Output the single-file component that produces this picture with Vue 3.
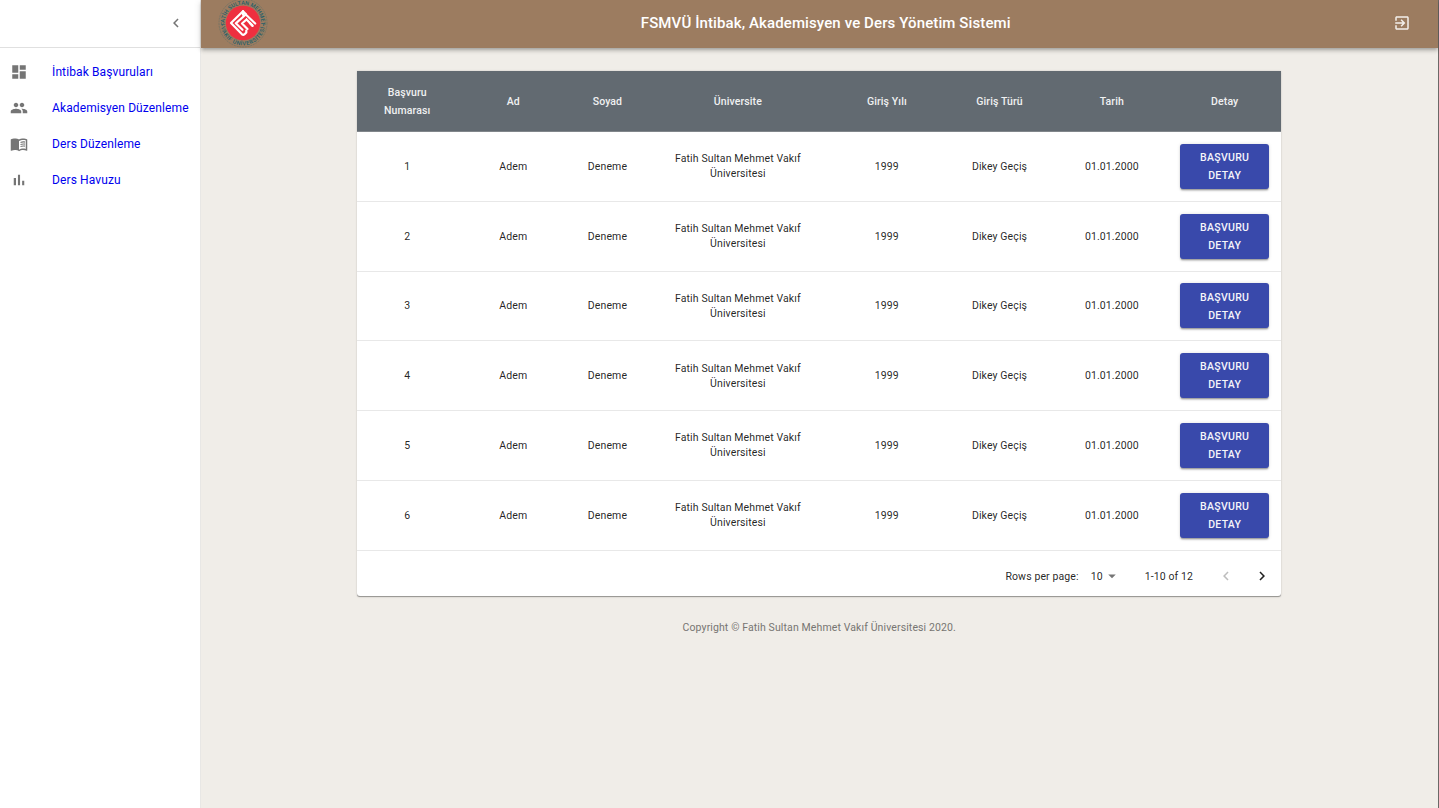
<script setup>
const menu = [
  { label: 'İntibak Başvuruları', icon: 'M3 13h8V3H3v10zm0 8h8v-6H3v6zm10 0h8V11h-8v10zm0-18v6h8V3h-8z' },
  { label: 'Akademisyen Düzenleme', icon: 'M16 11c1.66 0 2.99-1.34 2.99-3S17.66 5 16 5c-1.66 0-3 1.34-3 3s1.34 3 3 3zm-8 0c1.66 0 2.99-1.34 2.99-3S9.66 5 8 5C6.34 5 5 6.34 5 8s1.34 3 3 3zm0 2c-2.33 0-7 1.17-7 3.5V19h14v-2.500c0-2.330-4.670-3.500-7-3.500zm8 0c-.29 0-.62.02-.97.05 1.160.840 1.970 1.970 1.970 3.450V19h6v-2.500c0-2.330-4.670-3.500-7-3.500z' },
  { label: 'Ders Düzenleme', icon: 'M17.500 4.500c-1.950 0-4.050.4-5.500 1.500-1.450-1.100-3.550-1.500-5.500-1.500S2.450 4.900 1 6v14.650c0 .250.250.5.5.5.1 0 .15-.05.25-.05C3.100 20.450 5.050 20 6.500 20c1.950 0 4.050.4 5.500 1.500 1.350-.85 3.800-1.500 5.500-1.500 1.650 0 3.350.3 4.750 1.050.1.050.15.050.25.050.25 0 .5-.25.5-.5V6c-1.490-1.120-3.630-1.500-5.500-1.500zm3.500 14c-1.100-.35-2.300-.5-3.500-.5-1.700 0-4.150.65-5.500 1.500V8c1.350-.85 3.800-1.500 5.500-1.500 1.200 0 2.400.15 3.500.5v11.500zM14 9.200c1.700-.75 4-.9 6-.5v1.500c-2-.4-4.300-.25-6 .55zm0 2.700c1.700-.75 4-.9 6-.5v1.500c-2-.4-4.300-.25-6 .55zm0 2.700c1.700-.75 4-.9 6-.5v1.500c-2-.4-4.300-.25-6 .55z' },
  { label: 'Ders Havuzu', icon: 'M5 9.200h3V19H5zM10.600 5h2.800v14h-2.800zm5.600 8H19v6h-2.800z' },
]
const columns = ['Başvuru Numarası', 'Ad', 'Soyad', 'Üniversite', 'Giriş Yılı', 'Giriş Türü', 'Tarih', 'Detay']
const rows = [1, 2, 3, 4, 5, 6].map((n) => [n, 'Adem', 'Deneme', 'Fatih Sultan Mehmet Vakıf Üniversitesi', '1999', 'Dikey Geçiş', '01.01.2000'])
</script>

<template>
  <div class="layout">
    <aside class="sidebar">
      <div class="collapse">
        <svg class="icon" viewBox="0 0 24 24"><path d="M15.410 7.410L14 6l-6 6 6 6 1.410-1.410L10.830 12z" /></svg>
      </div>
      <nav>
        <a v-for="item in menu" :key="item.label" class="item">
          <svg class="icon" viewBox="0 0 24 24"><path :d="item.icon" /></svg>
          <span>{{ item.label }}</span>
        </a>
      </nav>
    </aside>

    <div class="content">
      <header class="bar">
        <svg class="logo" viewBox="0 0 50 50">
          <defs>
            <path id="ring-top" d="M6.700 28v-3a18.300 18.300 0 0 1 36.600 0v3" />
            <path id="ring-bottom" d="M2.600 25a22.400 22.400 0 0 0 44.800 0" />
          </defs>
          <circle cx="25" cy="25" r="24" fill="none" stroke="#6a7166" stroke-width=".7" stroke-dasharray="2 .8" />
          <circle cx="25" cy="25" r="17.200" fill="#ee2f3f" />
          <text class="seal"><textPath href="#ring-top" startOffset="50%">FATİH SULTAN MEHMET</textPath></text>
          <text class="seal wide"><textPath href="#ring-bottom" startOffset="50%">VAKIF ÜNİVERSİTESİ</textPath></text>
          <circle cx="4.300" cy="27" r=".7" fill="#245f69" />
          <circle cx="45.700" cy="27" r=".7" fill="#245f69" />
          <g fill="none" stroke="#fff" stroke-width="2.200" stroke-linejoin="round" stroke-linecap="round">
            <path d="M25 13.300L13 25l11 11.300q1.300 1 2.600-.1l1.700-1.700v-2" />
            <path d="M25 13.300v3.500M27.800 16.500L17.800 25.300l6.700 6.500" />
            <path d="M27.800 16.500l9.400 9M25 13.300l3 3M32 25.300l2.500 2.600" />
            <path d="M28.500 21.500l-4.500 4 5.500 5.500M28.500 21.500l6 6" />
          </g>
        </svg>
        <h1>FSMVÜ İntibak, Akademisyen ve Ders Yönetim Sistemi</h1>
        <svg class="icon exit" viewBox="0 0 24 24"><path d="M10.090 15.590L11.500 17l5-5-5-5-1.410 1.410L12.670 11H3v2h9.670l-2.580 2.590zM19 3H5c-1.110 0-2 .9-2 2v4h2V5h14v14H5v-4H3v4c0 1.100.89 2 2 2h14c1.100 0 2-.9 2-2V5c0-1.100-.9-2-2-2z" /></svg>
      </header>

      <main>
        <section class="paper">
          <div class="row head">
            <div v-for="c in columns" :key="c" class="cell">{{ c }}</div>
          </div>
          <div v-for="r in rows" :key="r[0]" class="row">
            <div v-for="(v, i) in r" :key="i" class="cell">{{ v }}</div>
            <div class="cell"><button>BAŞVURU DETAY</button></div>
          </div>
          <div class="pager">
            <span>Rows per page:</span>
            <span class="size">10</span>
            <svg class="icon" viewBox="0 0 24 24"><path d="M7 10l5 5 5-5z" /></svg>
            <span class="range">1-10 of 12</span>
            <svg class="icon prev" viewBox="0 0 24 24"><path d="M15.410 16.590L10.830 12l4.580-4.590L14 6l-6 6 6 6z" /></svg>
            <svg class="icon next" viewBox="0 0 24 24"><path d="M8.590 16.590L13.170 12 8.590 7.410 10 6l6 6-6 6z" /></svg>
          </div>
        </section>
        <footer>Copyright © Fatih Sultan Mehmet Vakıf Üniversitesi 2020.</footer>
      </main>
    </div>
  </div>
</template>

<style>
body {
  margin: 0;
  overflow: hidden;
}
</style>

<style scoped>
.layout {
  display: flex;
  box-sizing: border-box;
  width: 100vw;
  height: 100vh;
  border-right: 1px solid #6b6967;
  background: #f0ede8;
  font-family: Roboto, sans-serif;
  color: rgba(0, 0, 0, 0.87);
}
.icon {
  display: block;
  flex: none;
  width: 18px;
  height: 18px;
  fill: #757575;
}
.sidebar {
  box-sizing: border-box;
  flex: none;
  width: 200.500px;
  background: #fff;
  border-right: 1px solid #e8e7e5;
}
.collapse {
  display: flex;
  align-items: center;
  justify-content: flex-end;
  box-sizing: border-box;
  height: 48px;
  padding: 0 14.500px 2px 0;
  border-bottom: 1px solid #e0e0e0;
}
nav {
  padding-top: 6px;
}
.item {
  display: flex;
  align-items: center;
  height: 36px;
  padding-left: 10px;
  font-size: 12px;
  letter-spacing: 0.113px;
  color: #0000ee;
  white-space: nowrap;
}
.item span {
  margin-left: 24px;
}
.content {
  flex: 1;
  min-width: 0;
}
.bar {
  display: flex;
  align-items: center;
  box-sizing: border-box;
  height: 48px;
  padding: 0 27.500px 2px 17.500px;
  background: #9c7c60;
  box-shadow: 0 1.500px 3px -0.750px rgba(0, 0, 0, 0.2), 0 3px 3.750px rgba(0, 0, 0, 0.14), 0 0.750px 7.500px rgba(0, 0, 0, 0.12);
}
.logo {
  flex: none;
  width: 50px;
  height: 50px;
  overflow: visible;
}
.seal {
  font-size: 5.600px;
  font-weight: 500;
  letter-spacing: 0;
  fill: #245f69;
  text-anchor: middle;
}
.wide {
  letter-spacing: 0.500px;
}
h1 {
  flex: 1;
  margin: 0;
  padding-right: 9px;
  font-size: 15px;
  font-weight: 500;
  letter-spacing: 0.113px;
  text-align: center;
  color: #fff;
}
.exit {
  fill: #f3efeb;
}
main {
  display: flex;
  flex-direction: column;
  align-items: center;
  padding-top: 23.250px;
}
.paper {
  width: 924.400px;
  background: #fff;
  border-radius: 0 0 3px 3px;
  box-shadow: 0 1.500px 0.750px -0.750px rgba(0, 0, 0, 0.2), 0 0.750px 0.750px rgba(0, 0, 0, 0.14), 0 0.750px 2.250px rgba(0, 0, 0, 0.12);
}
.row {
  display: grid;
  grid-template-columns: 100.300px 112px 76.200px 184.700px 113.300px 112px 112.700px 113px;
  align-items: center;
  box-sizing: border-box;
  height: 69.750px;
  border-bottom: 1px solid #e8e8e8;
  font-size: 10.500px;
  line-height: 15px;
  letter-spacing: 0.113px;
  text-align: center;
}
.cell {
  padding: 0 12px;
}
.head {
  height: 60.850px;
  padding-top: 1px;
  background: #626a71;
  border-bottom-color: #81868b;
  font-weight: 500;
  line-height: 18px;
  color: #f0f1f1;
}
button {
  display: block;
  width: 89px;
  height: 45px;
  padding: 1.300px 12px 0;
  border: 0;
  border-radius: 3px;
  background: #3949ab;
  box-shadow: 0 2.250px 0.750px -1.500px rgba(0, 0, 0, 0.2), 0 1.500px 1.500px rgba(0, 0, 0, 0.14), 0 0.750px 3.750px rgba(0, 0, 0, 0.12);
  font: 500 10.500px/18px Roboto, sans-serif;
  letter-spacing: 0.300px;
  color: #f5f5fa;
}
.pager {
  display: flex;
  align-items: center;
  box-sizing: border-box;
  height: 45.750px;
  padding: 5.500px 0 0 648.400px;
  font-size: 10.500px;
  letter-spacing: 0.113px;
  white-space: nowrap;
}
.size {
  margin-left: 12px;
}
.range {
  margin-left: 24px;
}
.prev {
  margin-left: 24px;
  fill: #bdbdbd;
}
.next {
  margin-left: 18px;
  fill: #212121;
}
footer {
  margin-top: 23.300px;
  font-size: 10.500px;
  line-height: 15px;
  letter-spacing: 0.113px;
  color: #777572;
}
</style>
